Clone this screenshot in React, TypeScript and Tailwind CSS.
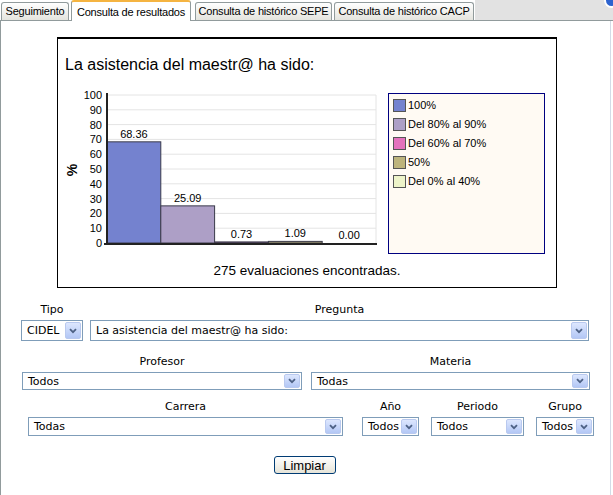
import React from 'react';

const tabs = [
  { label: 'Seguimiento', cls: 'ml-[1px] w-[68px]', active: false },
  { label: 'Consulta de resultados', cls: 'ml-[2px] w-[120px]', active: true },
  { label: 'Consulta de histórico SEPE', cls: 'ml-[4px] w-[137px]', active: false },
  { label: 'Consulta de histórico CACP', cls: 'ml-[2px] w-[140px]', active: false },
];

const bars = [
  { v: 68.36, label: '68.36', color: '#7482cf' },
  { v: 25.09, label: '25.09', color: '#ad9fc6' },
  { v: 0.73, label: '0.73', color: '#e472bd' },
  { v: 1.09, label: '1.09', color: '#bdb47c' },
  { v: 0, label: '0.00', color: '#eef4c9' },
];

const legend = [
  { label: '100%', color: '#7482cf' },
  { label: 'Del 80% al 90%', color: '#ad9fc6' },
  { label: 'Del 60% al 70%', color: '#e472bd' },
  { label: '50%', color: '#bdb47c' },
  { label: 'Del 0% al 40%', color: '#eef4c9' },
];

// plot geometry inside the svg
const LEFT = 49;
const RIGHT = 318;
const BASE = 158;
const SCALE = 1.48;
const BAR_W = (RIGHT - LEFT) / bars.length;

function Chevron() {
  return (
    <svg width="8" height="6" viewBox="0 0 8 6">
      <path d="M1 1.2 L4 4.2 L7 1.2" fill="none" stroke="#4d6185" strokeWidth="1.8" />
    </svg>
  );
}

function Select({ value, className }: { value: string; className: string }) {
  return (
    <div className={`flex items-stretch border border-[#7f9db9] bg-white p-px ${className}`}>
      <span className="flex flex-1 items-center truncate pl-[4px] text-[11px] leading-none text-black">{value}</span>
      <span className="flex w-[16px] items-center justify-center rounded-[2px] border border-[#b9c9ef] bg-gradient-to-b from-[#dde7fe] to-[#b3c7f5]">
        <Chevron />
      </span>
    </div>
  );
}

function Field({ label, value, className, h }: { label: string; value: string; className: string; h: string }) {
  return (
    <div className={`flex flex-col gap-[4px] ${className}`}>
      <div className="text-center text-[11px] leading-[13px] text-black">{label}</div>
      <Select value={value} className={h} />
    </div>
  );
}

function BarChart() {
  return (
    <svg width="322" height="170" className="font-['Liberation_Sans',Arial,sans-serif]">
      {Array.from({ length: 11 }).map((_, k) => {
        const y = BASE - k * 10 * SCALE;
        return (
          <g key={k}>
            {k > 0 && <line x1={LEFT} x2={RIGHT} y1={y} y2={y} stroke="#e4e4e4" strokeWidth="1" />}
            <text x={44} y={y + 4} fontSize="11" textAnchor="end" fill="#000">
              {k * 10}
            </text>
          </g>
        );
      })}
      <line x1={RIGHT} x2={RIGHT} y1={BASE - 100 * SCALE} y2={BASE} stroke="#e4e4e4" />
      {bars.map((b, i) => {
        const x = LEFT + i * BAR_W;
        const h = b.v * SCALE;
        return (
          <g key={b.label}>
            {h > 0 && (
              <rect x={x} y={BASE - h} width={BAR_W} height={h} fill={b.color} stroke="#3a3a4a" strokeWidth="1" />
            )}
            <text x={x + BAR_W / 2} y={BASE - h - 4} fontSize="11" textAnchor="middle" fill="#000">
              {b.label}
            </text>
          </g>
        );
      })}
      <line x1={LEFT} x2={LEFT} y1={8} y2={BASE + 1} stroke="#222" strokeWidth="2" />
      <line x1={46} x2={RIGHT + 1} y1={BASE + 1} y2={BASE + 1} stroke="#222" strokeWidth="2" />
      <text x={14} y={85} fontSize="14" fontWeight="bold" textAnchor="middle" transform="rotate(-90 14 85)" dy="5">
        %
      </text>
    </svg>
  );
}

export default function App() {
  return (
    <div className="flex h-[495px] w-[613px] flex-col overflow-hidden bg-white font-['DejaVu_Sans',Verdana,sans-serif]">
      {/* tab strip */}
      <div className="flex h-[21px] items-end border-b border-[#919b9c] font-['Liberation_Sans',Arial,sans-serif] text-[11px] tracking-[-0.2px]">
        {tabs.map((t) =>
          t.active ? (
            <div
              key={t.label}
              className={`relative z-10 -mb-px flex h-[21px] items-start justify-center whitespace-nowrap rounded-t-[3px] border border-b-0 border-[#919b9c] border-t-2 border-t-[#f5b441] bg-white pt-[2px] text-black ${t.cls}`}
            >
              {t.label}
            </div>
          ) : (
            <div
              key={t.label}
              className={`flex h-[18px] items-center justify-center whitespace-nowrap rounded-t-[3px] border border-b-0 border-[#919b9c] bg-gradient-to-b from-white to-[#e4e4de] text-black ${t.cls}`}
            >
              {t.label}
            </div>
          )
        )}
        <div className="ml-[1px] flex flex-1 justify-end self-stretch bg-[#e2e2e2]">
          <div className="-mr-[6px] -mt-[7px] h-[15px] w-[15px] rounded-full border-2 border-white bg-[#2d63cf]" />
        </div>
      </div>

      {/* panel */}
      <div className="flex w-[611px] flex-1 flex-col border-l border-r border-l-[#919b9c] border-r-[#d3dbe7]">
        {/* chart box */}
        <div className="ml-[56px] mt-[16px] flex h-[251px] w-[500px] flex-col border border-t-2 border-black font-['Liberation_Sans',Arial,sans-serif]">
          <div className="mt-[17px] pl-[7px] text-[16px] leading-[18px] text-black">La asistencia del maestr@ ha sido:</div>
          <div className="mt-[11px] flex items-start">
            <BarChart />
            <div className="ml-[8px] mt-[8px] flex h-[161px] w-[157px] flex-col gap-[6px] border border-[#000080] bg-[#fffaf3] px-[4px] pt-[5px]">
              {legend.map((l) => (
                <div key={l.label} className="flex items-center gap-[2px] text-[11px] leading-[13px] text-black">
                  <span className="h-[13px] w-[13px] border border-[#555]" style={{ backgroundColor: l.color }} />
                  <span>{l.label}</span>
                </div>
              ))}
            </div>
          </div>
          <div className="mt-[8px] text-center text-[13.5px] leading-[16px] text-black">275 evaluaciones encontradas.</div>
        </div>

        {/* filters */}
        <div className="ml-[20px] mt-[15px] flex">
          <Field label="Tipo" value="CIDEL" className="w-[62px]" h="h-[21px]" />
          <Field label="Pregunta" value="La asistencia del maestr@ ha sido:" className="ml-[7px] w-[499px]" h="h-[21px]" />
        </div>

        <div className="ml-[21px] mt-[14px] flex">
          <Field label="Profesor" value="Todos" className="w-[280px]" h="h-[18px]" />
          <Field label="Materia" value="Todas" className="ml-[9px] w-[279px]" h="h-[18px]" />
        </div>

        <div className="ml-[27px] mt-[10px] flex">
          <Field label="Carrera" value="Todas" className="w-[315px]" h="h-[19px]" />
          <Field label="Año" value="Todos" className="ml-[19px] w-[57px]" h="h-[19px]" />
          <Field label="Periodo" value="Todos" className="ml-[12px] w-[93px]" h="h-[19px]" />
          <Field label="Grupo" value="Todos" className="ml-[12px] w-[58px]" h="h-[19px]" />
        </div>

        <div className="mt-[20px] flex justify-center pr-[2px]">
          <button className="h-[18px] w-[62px] rounded-[3px] border border-[#003c74] bg-gradient-to-b from-white to-[#e6e4d8] font-['Liberation_Sans',Arial,sans-serif] text-[13px] leading-none text-black">
            Limpiar
          </button>
        </div>
      </div>
    </div>
  );
}
